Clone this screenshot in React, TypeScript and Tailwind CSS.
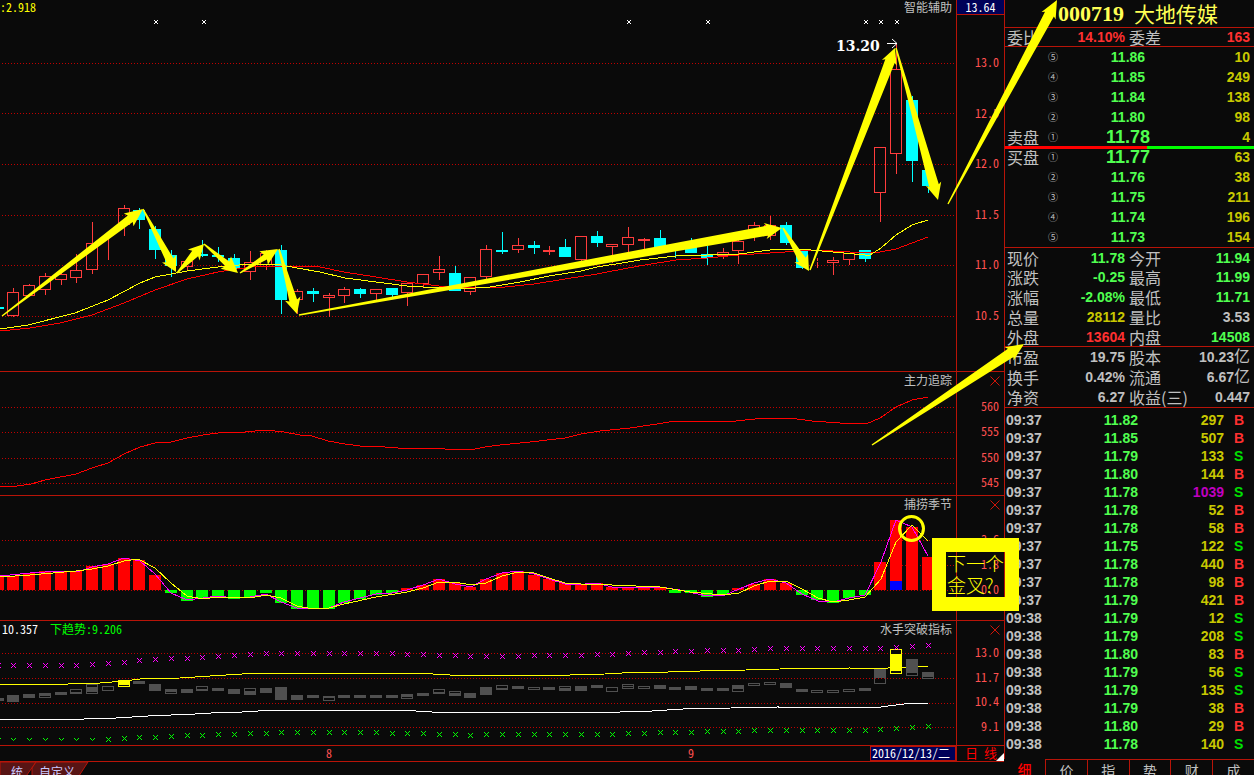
import type { ReactNode } from "react"

// [up, high, bodyTop, bodyBottom, low]
type Candle = [0 | 1, number, number, number, number]

const FIRST = -1
const CANDLES: Candle[] = [
  [0, 307, 307, 309, 309], [1, 288, 292, 316, 317], [1, 284, 285, 296, 296], [1, 273, 276, 290, 295],
  [1, 268, 274, 280, 285], [1, 254, 270, 278, 283], [1, 222, 243, 270, 274], [1, 238, 238, 239, 260],
  [1, 205, 208, 225, 236], [0, 208, 210, 220, 229], [0, 226, 229, 250, 259], [0, 250, 255, 266, 277],
  [1, 258, 261, 267, 271], [0, 240, 254, 256, 257], [0, 247, 255, 257, 262], [0, 254, 258, 269, 272],
  [1, 251, 262, 272, 280], [1, 250, 253, 265, 270], [0, 245, 250, 300, 314], [1, 289, 291, 300, 314],
  [0, 288, 291, 294, 302], [1, 293, 295, 298, 317], [1, 287, 289, 296, 303], [0, 288, 289, 294, 298],
  [1, 289, 289, 294, 300], [0, 288, 288, 295, 297], [1, 283, 283, 293, 306], [1, 274, 274, 284, 287],
  [1, 256, 269, 273, 280], [0, 266, 273, 291, 291], [1, 277, 277, 292, 295], [1, 245, 249, 277, 280],
  [0, 232, 250, 252, 254], [1, 238, 245, 250, 253], [0, 241, 245, 248, 254], [1, 246, 250, 252, 255],
  [0, 239, 247, 257, 257], [1, 236, 236, 260, 262], [0, 231, 236, 243, 247], [1, 244, 244, 247, 263],
  [1, 227, 237, 245, 253], [1, 238, 239, 241, 250], [0, 230, 238, 248, 249], [0, 246, 247, 250, 258],
  [0, 238, 243, 253, 253], [0, 246, 254, 258, 265], [1, 248, 252, 256, 259], [1, 240, 241, 251, 264],
  [1, 222, 225, 237, 241], [1, 216, 225, 236, 240], [0, 222, 225, 243, 245], [0, 251, 251, 268, 269],
  [1, 258, 261, 262, 268], [1, 257, 260, 263, 275], [1, 253, 253, 260, 265], [0, 250, 250, 259, 262],
  [1, 147, 147, 193, 222], [1, 43, 69, 154, 174], [0, 96, 100, 161, 182], [0, 165, 170, 186, 193],
]

const BARS = [
  577, 576, 573, 571, 571, 571, 566, 564, 558, 560, 575, 593, 601, 598, 597, 599, 597, 593, 603, 609, 609, 609, 603, 599, 595, 593,
  588, 585, 579, 583, 587, 579, 573, 571, 575, 579, 583, 584, 583, 587, 587, 587, 588, 593, 593, 597, 595, 588, 584, 579, 583,
  595, 600, 603, 598, 595, 562, 520, 527, 557,
]
const ZERO = 590

// [outlineTop, outlineBottom, fillTop, fillBottom]
const BOXES = [
  [698, 701, 698, 701], [695, 702, 695, 702], [694, 698, 694, 698], [693, 698, 693, 696], [692, 695, 692, 695], [689, 694, 692, 694],
  [684, 694, 687, 692], [686, 691, 0, 0], [680, 687, 680, 685], [681, 684, 681, 684], [684, 691, 684, 690], [689, 694, 689, 692],
  [689, 693, 689, 693], [686, 691, 689, 691], [688, 691, 688, 691], [689, 694, 689, 694], [688, 695, 691, 695], [688, 693, 688, 693],
  [687, 700, 687, 700], [695, 700, 695, 700], [695, 698, 695, 698], [696, 701, 696, 698], [695, 698, 695, 698], [695, 698, 695, 698],
  [695, 698, 695, 698], [695, 698, 695, 698], [694, 699, 694, 697], [693, 696, 693, 696], [689, 694, 692, 694], [691, 696, 693, 696],
  [693, 698, 693, 698], [687, 695, 687, 695], [685, 690, 688, 690], [686, 689, 686, 689], [687, 690, 0, 0], [687, 690, 687, 690],
  [686, 691, 688, 691], [686, 691, 686, 691], [685, 688, 685, 688], [687, 692, 0, 0], [684, 689, 686, 687], [686, 689, 0, 0],
  [685, 689, 685, 689], [687, 690, 687, 690], [686, 690, 686, 690], [688, 691, 688, 691], [688, 691, 688, 691], [685, 692, 685, 689],
  [683, 686, 0, 0], [682, 685, 0, 0], [683, 688, 683, 688], [689, 692, 689, 692], [690, 693, 0, 0], [690, 693, 0, 0],
  [689, 692, 0, 0], [688, 691, 688, 691], [669, 684, 669, 678], [649, 674, 654, 671], [659, 676, 659, 673], [672, 679, 672, 677],
]

const UPPER = [
  665, 665, 665, 665, 665, 665, 664, 663, 662, 660, 659, 658, 658, 657, 656, 655, 654, 653, 653, 653, 653, 653, 653, 653, 653, 653,
  654, 654, 655, 655, 656, 656, 656, 656, 655, 655, 655, 655, 654, 654, 653, 652, 652, 651, 651, 650, 650, 650, 649, 648, 648,
  648, 648, 648, 648, 648, 648, 647, 646, 645,
]
const LOWER = [
  739, 739, 739, 739, 739, 739, 739, 739, 738, 737, 737, 736, 735, 735, 734, 734, 733, 733, 732, 732, 732, 732, 732, 732, 732, 733,
  733, 733, 734, 734, 735, 734, 734, 734, 734, 734, 734, 734, 734, 734, 733, 733, 732, 732, 732, 731, 731, 731, 730, 730, 730,
  730, 730, 730, 730, 730, 729, 728, 727, 726,
]

const MA_YELLOW = "0,329 28,325 75,313 108,300 140,283 155,277 187,271 218,267 250,264 281,265 297,268 320,272 345,278 376,282 407,286 423,287 455,288 475,288 490,287 520,282 549,276 581,271 597,267 628,262 640,260 676,256 707,255 739,254 770,250 800,249 833,252 865,255 870,255 881,248 896,235 912,225 928,220"
const MA_RED = "0,331 30,328 60,323 92,315 124,303 155,290 187,279 218,272 250,267 275,266 300,266 320,267 344,272 376,277 407,282 439,286 480,288 505,287 534,284 565,279 597,274 628,268 645,265 676,260 707,258 739,255 770,253 800,251 815,250 850,252 880,252 896,249 912,243 928,237"
const TRACK = "0,487 17,486 31,484 45,480 76,474 92,468 108,463 124,454 140,447 155,443 171,442 187,438 203,435 218,433 245,432 265,430 284,432 300,435 312,436 328,441 345,444 360,446 385,447 410,449 430,448 445,449 470,450 485,447 500,445 530,442 565,438 581,434 600,431 630,428 657,424 675,421 715,421 728,422 745,420 765,418 790,418 812,421 840,423 866,424 880,418 896,407 912,400 928,397"
const MACD_FAST = "0,576 30,573 60,571 80,571 92,567 108,564 124,558 140,561 155,574 171,593 187,600 203,598 218,596 234,598 250,597 266,594 281,602 297,608 313,609 329,608 344,602 360,598 376,594 392,593 407,590 423,585 439,579 455,584 471,587 486,579 502,573 518,571 534,574 549,579 565,584 585,584 597,583 612,587 660,587 680,590 707,596 725,595 739,589 754,583 770,579 786,583 802,594 818,601 833,602 849,598 865,595 881,562 896,520 912,527 928,556"
const MACD_SLOW = "0,577 30,575 76,571 92,569 108,566 124,561 138,559 155,568 171,583 187,596 203,599 218,597 250,598 266,595 281,598 297,606 313,609 329,608 344,604 376,597 407,592 423,588 439,582 455,582 471,585 486,583 502,576 518,572 534,573 549,578 565,583 581,584 612,585 660,587 690,592 723,595 739,593 754,586 770,581 786,581 802,589 818,598 833,602 849,600 865,597 881,579 896,542 912,525 928,541"
const TREND_UP = "0,684 68,684 70,683 100,683 124,681 140,679 180,678 210,676 226,675 258,673 415,673 450,675 570,675 605,674 640,672 668,672 700,671 746,670 780,669 850,668 872,669 888,668 912,667 928,666"
const TREND_DOWN = "0,719 84,719 116,718 148,716 195,714 211,713 242,712 274,710 400,710 432,712 465,713 494,712 620,712 652,711 683,709 731,708 778,707 872,708 881,707 896,705 904,704 928,703"

const SIGNALS = [156, 204, 629, 708, 866, 881, 897]

// [tailX, tailY, tipX, tipY, body half width, head half width, head length]
const ARROWS = [
  [2, 316, 143, 209, 4, 8, 18], [143, 209, 176, 272, 4, 8, 15], [177, 273, 204, 244, 4, 8, 15], [204, 244, 238, 273, 3, 8, 16],
  [240, 273, 278, 249, 3, 8, 17], [279, 249, 297, 314, 4, 8, 16], [299, 315, 782, 228, 5, 8, 17], [783, 228, 809, 271, 4, 8, 15],
  [810, 270, 895, 48, 5, 8, 16], [896, 48, 938, 200, 5, 8, 17], [948, 204, 1057, 0, 5, 8, 18], [872, 445, 1024, 344, 5, 8, 18],
]

const ASKS = [["⑤", "11.86", "10"], ["④", "11.85", "249"], ["③", "11.84", "138"], ["②", "11.80", "98"], ["①", "11.78", "4"]]
const BIDS = [["①", "11.77", "63"], ["②", "11.76", "38"], ["③", "11.75", "211"], ["④", "11.74", "196"], ["⑤", "11.73", "154"]]

const GREEN = "text-[#50ff50]"
const RED = "text-[#ff3030]"
const GOLD = "text-[#c8c800]"
const GRAY = "text-[#c0c0c0]"

const STATS: [string, string, string, string, string, string, string?][] = [
  ["现价", "11.78", GREEN, "今开", "11.94", GREEN],
  ["涨跌", "-0.25", GREEN, "最高", "11.99", GREEN],
  ["涨幅", "-2.08%", GREEN, "最低", "11.71", GREEN],
  ["总量", "28112", GOLD, "量比", "3.53", GRAY],
  ["外盘", "13604", RED, "内盘", "14508", GREEN],
  ["市盈", "19.75", GRAY, "股本", "10.23", GRAY, "亿"],
  ["换手", "0.42%", GRAY, "流通", "6.67", GRAY, "亿"],
  ["净资", "6.27", GRAY, "收益(三)", "0.447", GRAY],
]

const TICKS = [
  ["09:37", "11.82", "297", "B"], ["09:37", "11.85", "507", "B"], ["09:37", "11.79", "133", "S"], ["09:37", "11.80", "144", "B"],
  ["09:37", "11.78", "1039", "S"], ["09:37", "11.78", "52", "B"], ["09:37", "11.78", "58", "B"], ["09:37", "11.75", "122", "S"],
  ["09:37", "11.78", "440", "B"], ["09:37", "11.78", "98", "B"], ["09:37", "11.79", "421", "B"], ["09:38", "11.79", "12", "S"],
  ["09:38", "11.79", "208", "S"], ["09:38", "11.80", "83", "B"], ["09:38", "11.79", "56", "S"], ["09:38", "11.79", "135", "S"],
  ["09:38", "11.79", "38", "B"], ["09:38", "11.80", "29", "B"], ["09:38", "11.78", "140", "S"],
]

const PLOT_W = 956
const BID_SHARE = (100 + 14.1) / 2

function xAt(n: number) {
  return Math.floor(13.8 + (n + FIRST) * 15.765)
}

function arrowPoints([x1, y1, x2, y2, body, head, len]: number[]) {
  const d = Math.hypot(x2 - x1, y2 - y1)
  const ux = (x2 - x1) / d
  const uy = (y2 - y1) / d
  const at = (along: number, side: number) => `${(x1 + ux * along - uy * side).toFixed(1)},${(y1 + uy * along + ux * side).toFixed(1)}`
  return [at(0, -0.7), at(d - len + 2, -body), at(d - len, -head), at(d, 0), at(d - len, head), at(d - len + 2, body), at(0, 0.7)].join(" ")
}

function Grid({ lines }: { lines: number[] }) {
  return (
    <g stroke="#c00000" strokeDasharray="1 2">
      {lines.map((y) => <line key={y} x1="2" x2="954" y1={y + 0.5} y2={y + 0.5} />)}
    </g>
  )
}

function Line({ points, color }: { points: string; color: string }) {
  return <polyline points={points} fill="none" stroke={color} />
}

interface PanelProps {
  title: string
  top: number
  height: number
  labels: string[]
  axisClass: string
  closable?: boolean
  current?: string
  legend?: ReactNode
  children: ReactNode
}

function Panel({ title, top, height, labels, axisClass, closable, current, legend, children }: PanelProps) {
  return (
    <section className="flex border-b border-[#b81408]">
      <div className="relative min-w-0 flex-1">
        <svg viewBox={`0 ${top} ${PLOT_W} ${height}`} className="block w-full" shapeRendering="crispEdges">{children}</svg>
        {legend}
        <h2 className={`absolute right-1 top-0 ${GRAY} ${closable ? "leading-4" : "leading-[14px]"}`}>{title}</h2>
      </div>
      <div className={`relative flex w-12 flex-col justify-between border-l border-[#b81408] pr-[5px] text-right leading-4 text-[#ff5050] ${axisClass}`}>
        {current && <span className="absolute inset-x-0 top-0 h-[15px] border-b border-[#b81408] bg-[#000058] text-center leading-[14px] text-white">{current}</span>}
        {closable && (
          <button aria-label={`关闭${title}`} className="absolute right-1 top-1">
            <svg viewBox="0 0 10 10" className="size-[10px]" stroke="#d01408"><path d="M.5.5l9 9M9.5.5l-9 9" /></svg>
          </button>
        )}
        {labels.map((l) => <span key={l}>{l}</span>)}
      </div>
    </section>
  )
}

function DepthTable({ side, rows, best }: { side: string; rows: string[][]; best: number }) {
  return (
    <table className="w-full table-fixed border-separate border-spacing-0">
      <tbody>
        {rows.map(([level, price, qty], i) => (
          <tr key={level} className="h-5">
            <th className={`w-[43px] p-0 pl-[2px] text-left text-base font-normal leading-5 ${GRAY}`}>{i === best ? side : ""}</th>
            <td className={`w-[30px] p-0 text-[10px] leading-5 ${GRAY}`}>{level}</td>
            <td className={`w-[100px] p-0 text-center font-bold [font-family:'Liberation_Sans',sans-serif] ${GREEN} ${i === best ? "text-lg/5" : "text-sm/5"}`}>{price}</td>
            <td className={`p-0 pr-1 text-right text-sm/5 font-bold [font-family:'Liberation_Sans',sans-serif] ${GOLD}`}>{qty}</td>
          </tr>
        ))}
      </tbody>
    </table>
  )
}

function Pair({ label, value, color, unit }: { label: string; value: string; color: string; unit?: string }) {
  return (
    <>
      <dt className={`whitespace-nowrap text-base/5 ${GRAY}`}>{label}</dt>
      <dd className={`flex text-sm/5 font-bold [font-family:'Liberation_Sans','Noto_Sans_CJK_SC',sans-serif] ${color}`}>
        {value}
        {unit && <span className="text-base/5 font-normal">{unit}</span>}
      </dd>
    </>
  )
}

function StatRow({ row, className }: { row: (typeof STATS)[number]; className: string }) {
  const [l1, v1, c1, l2, v2, c2, unit] = row
  return (
    <dl className={`flex items-center ${className}`}>
      <div className="flex w-[120px] justify-between pl-[2px]"><Pair label={l1} value={v1} color={c1} /></div>
      <div className="flex flex-1 justify-between pl-1 pr-1"><Pair label={l2} value={v2} color={c2} unit={unit} /></div>
    </dl>
  )
}

function Charts() {
  return (
    <>
      <Panel title="智能辅助" top={0} height={371} current="13.64" labels={["13.0", "12.5", "12.0", "11.5", "11.0", "10.5"]} axisClass="pt-[54px] pb-[48px]"
        legend={<span className="absolute left-0 top-0 leading-[14px] text-[#ffff00]">:2.918</span>}>
        <Grid lines={[63, 113, 164, 215, 265, 316]} />
        {CANDLES.map(([up, high, top, bottom, low], n) => {
          const x = xAt(n)
          if (!up) return (
            <g key={n} fill="#00ffff">
              <rect x={x} y={high} width="1" height={low - high} />
              <rect x={x - 6} y={top} width="12" height={bottom - top} />
            </g>
          )
          return (
            <g key={n} stroke="#ff3c3c" fill="none">
              <path d={`M${x + 0.5} ${high}V${top}M${x + 0.5} ${bottom}V${low}`} />
              <rect x={x - 5.5} y={top + 0.5} width="11" height={bottom - top - 1} />
            </g>
          )
        })}
        <Line points={MA_RED} color="#ff0000" />
        <Line points={MA_YELLOW} color="#ffff00" />
        {SIGNALS.map((x) => <path key={x} d={`M${x - 2} 20l4 4M${x + 2} 20l-4 4`} stroke="#fff" shapeRendering="auto" />)}
        <path d="M887 43.5h10M892 39l5 4.5l-5 4.5" stroke="#fff" fill="none" shapeRendering="auto" />
        <text x="836" y="51" fill="#fff" className="text-[14px] font-bold [font-family:'DejaVu_Serif',serif]">13.20</text>
      </Panel>

      <Panel title="主力追踪" top={372} height={123} closable labels={["560", "555", "550", "545"]} axisClass="pt-[26px] pb-[5px]">
        <Grid lines={[407, 432, 458, 483]} />
        <Line points={TRACK} color="#ff0000" />
      </Panel>

      <Panel title="捕捞季节" top={496} height={124} closable labels={["3.6", "1.8", "0.0"]} axisClass="pt-[35px] pb-[23px]">
        <Grid lines={[540, 565, 590]} />
        {BARS.map((y, n) => <rect key={n} x={xAt(n) - 6} y={Math.min(y, ZERO)} width="12" height={Math.abs(y - ZERO)} fill={y < ZERO ? "#ff0000" : "#00ff00"} />)}
        <rect x={890} y={581} width="12" height="9" fill="#0000ff" />
        <Line points={MACD_FAST} color="#ff00ff" />
        <Line points={MACD_SLOW} color="#ffff00" />
      </Panel>

      <Panel title="水手突破指标" top={621} height={124} closable labels={["13.0", "11.7", "10.4", "9.1"]} axisClass="pt-[23px] pb-[11px]"
        legend={
          <p className="absolute left-[2px] top-0 flex gap-3 leading-4">
            <span className="text-white">10.357</span>
            <span className="text-[#00ff00]">下趋势:9.206</span>
          </p>
        }>
        <Grid lines={[653, 678, 703, 727]} />
        <Line points={TREND_UP} color="#ffff00" />
        <Line points={TREND_DOWN} color="#ffffff" />
        {BOXES.map(([top, bottom, fillTop, fillBottom], n) => {
          const x = xAt(n)
          const color = n === 8 || n === 57 ? "#ffff00" : "#505050"
          return (
            <g key={n}>
              <rect x={x - 5.5} y={top + 0.5} width="11" height={bottom - top - 1} fill={n === 57 ? "#0a0a0a" : "none"} stroke={color} />
              <rect x={x - 6} y={fillTop} width="12" height={fillBottom - fillTop} fill={color} />
            </g>
          )
        })}
        <g shapeRendering="auto">
          {UPPER.map((y, n) => <path key={n} d={`M${xAt(n) - 2} ${y - 2}l5 5m0 -5l-5 5`} stroke="#ff00ff" />)}
          {LOWER.map((y, n) => <path key={n} d={n < 7 ? `M${xAt(n) - 2} ${y - 1}l2.5 2.5l2.5 -2.5` : `M${xAt(n) - 2} ${y - 2}l5 5m0 -5l-5 5`} stroke="#00ff00" fill="none" />)}
        </g>
      </Panel>
    </>
  )
}

function Quotes() {
  return (
    <aside className="flex w-[250px] flex-none flex-col">
      <div className="border-l border-[#b81408] pb-[6px]">
        <h1 className="flex h-7 items-center gap-[10px] border-b border-[#b81408] pl-[53px] text-[21px]/[26px] text-[#ffff54]">
          <span className="text-[22px]/[26px] font-bold [font-family:'Liberation_Serif',serif]">000719</span>
          <span className="pb-[2px]">大地传媒</span>
        </h1>
        <StatRow row={["委比", "14.10%", RED, "委差", "163", RED]} className="h-[19px] border-b border-[#b81408]" />
        <DepthTable side="卖盘" rows={ASKS} best={4} />
        <div className="relative -mb-[2px] -mt-px flex h-[3px] bg-[#00ff00]">
          <div className="bg-[#ff0000]" style={{ width: `${BID_SHARE}%` }} />
        </div>
        <DepthTable side="买盘" rows={BIDS} best={0} />
        <div className="border-y border-[#b81408]">
          {STATS.map((row, i) => (
            <StatRow key={row[0]} row={row} className={i === 0 ? "h-[19px]" : i === 4 ? "h-5 border-b border-[#b81408]" : "h-5"} />
          ))}
        </div>
        <table className="mt-[3px] w-full table-fixed border-separate border-spacing-0 text-sm/[18px] font-bold [font-family:'Liberation_Sans',sans-serif]">
          <tbody>
            {TICKS.map(([time, price, qty, side], i) => (
              <tr key={i} className="h-[18px]">
                <td className={`w-[60px] p-0 pl-px ${GRAY}`}>{time}</td>
                <td className={`w-[73px] p-0 text-right ${GREEN}`}>{price}</td>
                <td className={`p-0 text-right ${qty.length > 3 ? "text-[#c000c0]" : GOLD}`}>{qty}</td>
                <td className={`w-[30px] p-0 pl-[10px] ${side === "B" ? RED : "text-[#00e000]"}`}>{side}</td>
              </tr>
            ))}
          </tbody>
        </table>
      </div>
      <nav className="flex text-sm/5">
        {["细", "价", "指", "势", "财", "成"].map((t, i) => (
          <button key={t} className={i === 0 ? "w-[41px] font-medium text-[#ff0000]" : `flex-1 border-l border-t border-[#b81408] leading-[18px] ${GRAY}`}>{t}</button>
        ))}
      </nav>
    </aside>
  )
}

export default function App() {
  return (
    <main lang="zh-CN" className="relative flex h-screen items-start overflow-hidden bg-[#0a0a0a] text-xs [font-family:'Noto_Sans_CJK_SC',sans-serif]">
      <div className="min-w-0 flex-1 [font-feature-settings:'hwid']">
        <Charts />
        <div className="flex h-4 border-b border-[#b81408]">
          <div className="relative flex flex-1 justify-end">
            {[["8", 21], ["9", 44]].map(([m, n]) => (
              <span key={m} className="absolute top-0 -translate-x-1/2 leading-[14px] text-[#ff5050]" style={{ left: `${(xAt(Number(n)) / PLOT_W) * 100}%` }}>{m}</span>
            ))}
            <time className="h-[15px] w-[86px] border border-[#b81408] bg-[#000058] pl-px leading-3 text-white">2016/12/13/二</time>
          </div>
          <button className="relative flex w-12 gap-[6px] border-l border-[#b81408] pl-2 text-[13px]/[14px] text-[#ff0000]">
            <span>日</span>
            <span>线</span>
            <svg viewBox="0 0 8 8" className="absolute bottom-0 right-0 size-2"><path d="M8 0V8H0Z" fill="#fff" /></svg>
          </button>
        </div>
        <nav className="flex text-[#c8c8ff]">
          {[["统", "w-[34px] pl-[11px]", "M0 0H36L22 20H0Z"], ["自定义", "w-[55px] pl-[5px]", "M2 0H54L41 20H-2V6Z"]].map(([t, size, d]) => (
            <button key={t} className={`relative h-5 text-left leading-[14px] ${size}`}>
              <svg className="absolute inset-0 size-full overflow-visible" fill="#581414" stroke="#b81408"><path d={d} /></svg>
              <span className="relative">{t}</span>
            </button>
          ))}
        </nav>
      </div>

      <Quotes />

      <svg viewBox="0 0 1254 775" className="pointer-events-none absolute left-0 top-0 w-full" fill="#ffff00">
        {ARROWS.map((a) => <polygon key={a.join()} points={arrowPoints(a)} />)}
        <circle cx="911.5" cy="528.5" r="12" fill="none" stroke="#ffff00" strokeWidth="3" />
      </svg>
      <p className="absolute right-[235px] top-[538px] h-[73px] w-[87px] border-[14px] border-[#ffff00] pl-px text-[19px]/[22px] font-light text-[#ffff00]">
        下一个<br />金叉?
      </p>
    </main>
  )
}
